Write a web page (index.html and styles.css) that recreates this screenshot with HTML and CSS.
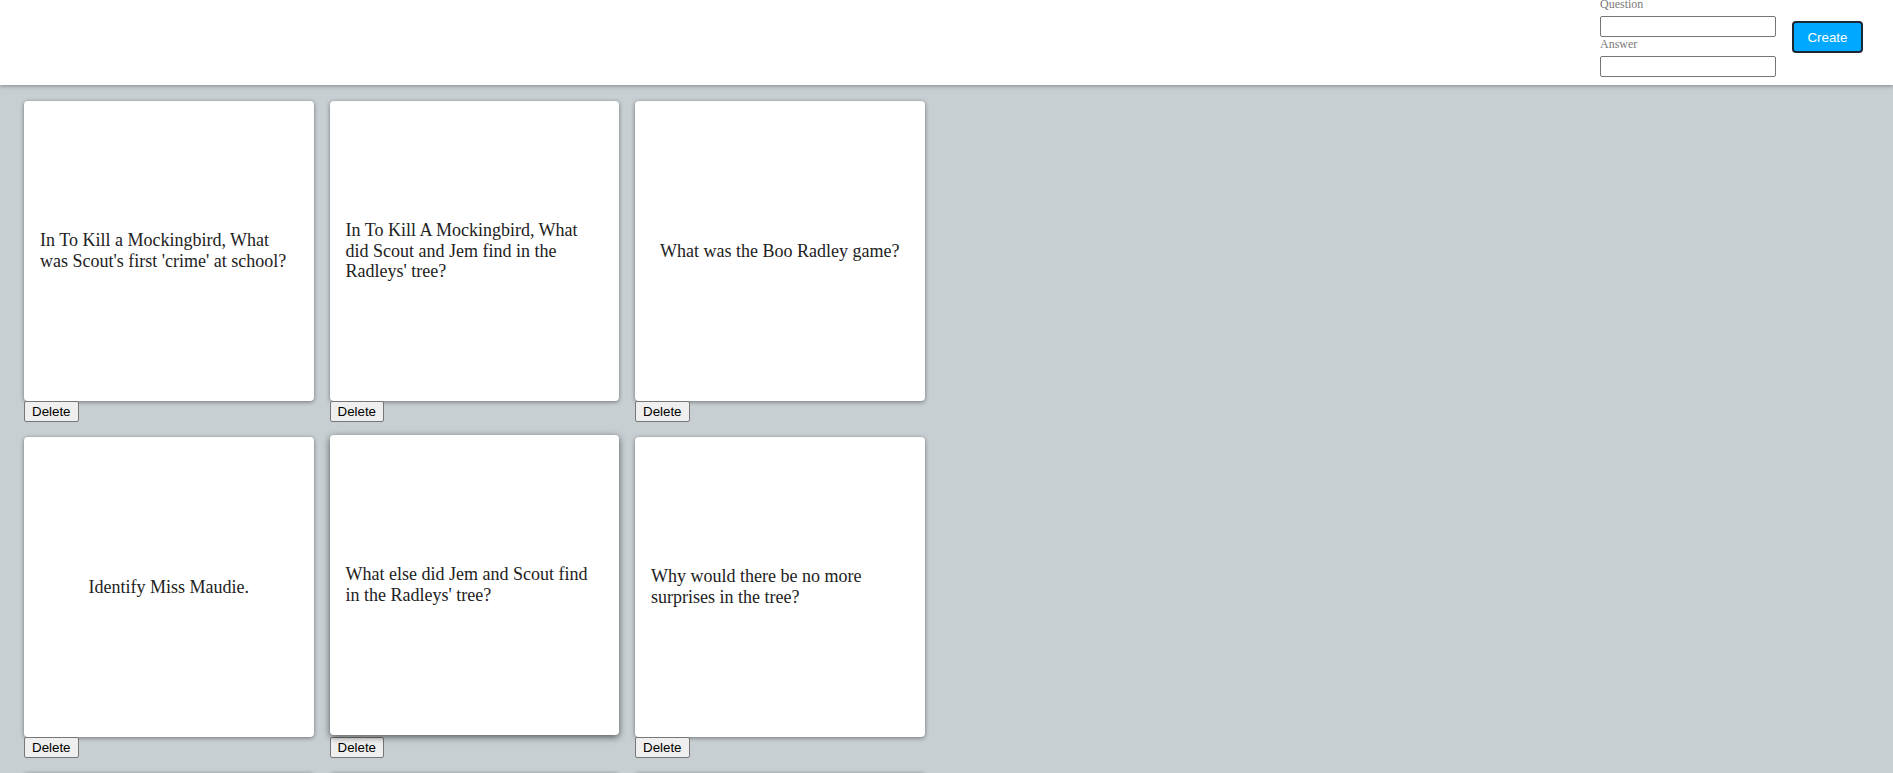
FILE: index.html
```html
<!DOCTYPE html>
<html lang="en">
<head>
<meta charset="utf-8">
<title>Flashcards</title>
<link rel="stylesheet" href="styles.css">
</head>
<body>
<header class="topbar">
  <form class="new-card">
    <div class="fields">
      <label class="field-label" for="question">Question</label>
      <input class="field-input" id="question" type="text">
      <label class="field-label" for="answer">Answer</label>
      <input class="field-input" id="answer" type="text">
    </div>
    <button class="create-btn" type="button">Create</button>
  </form>
</header>
<main class="deck">
  <div class="card-item">
    <div class="card"><p class="card-text">In To Kill a Mockingbird, What was Scout's first 'crime' at school?</p></div>
    <button class="delete-btn" type="button">Delete</button>
  </div>
  <div class="card-item">
    <div class="card"><p class="card-text">In To Kill A Mockingbird, What did Scout and Jem find in the Radleys' tree?</p></div>
    <button class="delete-btn" type="button">Delete</button>
  </div>
  <div class="card-item">
    <div class="card"><p class="card-text">What was the Boo Radley game?</p></div>
    <button class="delete-btn" type="button">Delete</button>
  </div>
  <div class="card-item">
    <div class="card"><p class="card-text">Identify Miss Maudie.</p></div>
    <button class="delete-btn" type="button">Delete</button>
  </div>
  <div class="card-item">
    <div class="card card-raised"><p class="card-text">What else did Jem and Scout find in the Radleys' tree?</p></div>
    <button class="delete-btn" type="button">Delete</button>
  </div>
  <div class="card-item">
    <div class="card"><p class="card-text">Why would there be no more surprises in the tree?</p></div>
    <button class="delete-btn" type="button">Delete</button>
  </div>
  <div class="card-item">
    <div class="card"></div>
  </div>
  <div class="card-item">
    <div class="card"></div>
  </div>
  <div class="card-item">
    <div class="card"></div>
  </div>
</main>
</body>
</html>
```
FILE: styles.css
```css
html, body {
  margin: 0;
  padding: 0;
}

body {
  background: #c7cfd2;
  font-family: "Liberation Serif", "Times New Roman", serif;
  color: #222;
  overflow-x: hidden;
}

.topbar {
  height: 85px;
  box-sizing: border-box;
  padding: 0 30px 11px 0;
  background: #fff;
  box-shadow: 0 1px 4px rgba(0, 0, 0, 0.35);
  display: flex;
  justify-content: flex-end;
  align-items: center;
  position: relative;
  z-index: 1;
}

.new-card {
  display: flex;
  align-items: center;
  gap: 16px;
  margin: 0;
}

.fields {
  display: flex;
  flex-direction: column;
}

.field-label {
  display: block;
  font-family: "Liberation Serif", "Times New Roman", serif;
  font-size: 12px;
  line-height: 14px;
  margin-bottom: 5px;
  color: #7a7a7a;
}

.field-input {
  display: block;
  width: 176px;
  height: 21px;
  box-sizing: border-box;
  margin: 0;
  padding: 1px 2px;
  border: 1px solid #767676;
  border-radius: 2px;
  background: #fff;
  font-family: "Liberation Sans", Arial, sans-serif;
  font-size: 13.333px;
}

.create-btn {
  width: 71px;
  height: 32px;
  box-sizing: border-box;
  padding: 0;
  border: 2px solid #1c2833;
  border-radius: 4px;
  background: #00a8ff;
  color: #fff;
  font-family: "Liberation Sans", Arial, sans-serif;
  font-size: 13.333px;
}

.deck {
  display: grid;
  grid-template-columns: repeat(3, 289.5px);
  column-gap: 16px;
  row-gap: 15px;
  padding: 16px 24px;
}

.card-item {
  display: flex;
  flex-direction: column;
  align-items: flex-start;
}

.card {
  width: 100%;
  height: 300px;
  box-sizing: border-box;
  padding: 16px;
  background: #fff;
  border-radius: 4px;
  box-shadow: 0 1px 4px rgba(0, 0, 0, 0.45);
  display: flex;
  align-items: center;
  justify-content: center;
}

.card-raised {
  transform: translateY(-2px);
  box-shadow: 0 2px 7px rgba(0, 0, 0, 0.6);
}

.card-text {
  margin: 0;
  font-size: 18px;
  line-height: 20.7px;
  color: #222;
}

.delete-btn {
  height: 21px;
  box-sizing: border-box;
  margin: 0;
  padding: 0 7px;
  border: 1px solid #767676;
  border-radius: 2px;
  background: #efefef;
  color: #000;
  font-family: "Liberation Sans", Arial, sans-serif;
  font-size: 13.333px;
  line-height: 19px;
}
```
